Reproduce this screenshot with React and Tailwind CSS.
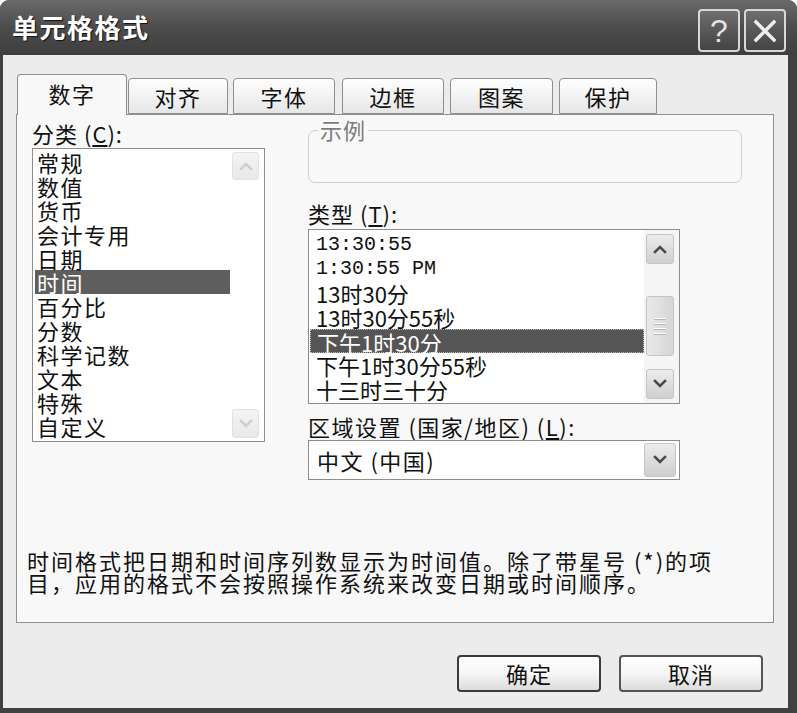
import React from 'react';

const Chevron = ({ up, color }) => (
  <svg width="14" height="10" viewBox="0 0 14 10">
    <path
      d={up ? 'M2 8 L7 3 L12 8' : 'M2 2 L7 7 L12 2'}
      fill="none"
      stroke={color}
      strokeWidth="2.6"
      strokeLinecap="square"
    />
  </svg>
);

const ScrollBtn = ({ up, disabled, className = '' }) => (
  <div
    className={`flex items-center justify-center rounded-[3px] border ${
      disabled
        ? 'border-[#e2e2e2] bg-linear-to-b from-[#f4f4f4] to-[#e8e8e8]'
        : 'border-[#c4c4c4] bg-linear-to-b from-[#ececec] to-[#cfcfcf]'
    } ${className}`}
  >
    <Chevron up={up} color={disabled ? '#cfcfcf' : '#4a4a4a'} />
  </div>
);

const Tab = ({ label, active, className = '' }) => (
  <div
    className={`flex items-center justify-center rounded-t-[4px] border border-[#8f8f8f] text-[22px] tracking-[1.5px] ${
      active
        ? 'relative z-10 -mb-px h-[41px] border-b-0 bg-[#f8f8f8] pb-[3px]'
        : 'h-[36px] bg-linear-to-b from-[#ffffff] to-[#e6e6e6] pt-[1px]'
    } ${className}`}
  >
    {label}
  </div>
);

const categories = ['常规', '数值', '货币', '会计专用', '日期', '时间', '百分比', '分数', '科学记数', '文本', '特殊', '自定义'];

const types = [
  { t: '13:30:55', mono: true },
  { t: '1:30:55 PM', mono: true },
  { t: '13时30分' },
  { t: '13时30分55秒' },
  { t: '下午1时30分', sel: true },
  { t: '下午1时30分55秒' },
  { t: '十三时三十分' },
];

export default function App() {
  return (
    <div className="h-[713px] w-[797px] bg-white font-['Noto_Sans_CJK_SC',sans-serif] text-[#111]">
      <div className="flex h-full flex-col overflow-hidden rounded-t-[9px] bg-[#404040]">
        {/* title bar */}
        <div className="flex h-[55px] shrink-0 items-center justify-between bg-linear-to-b from-[#6a6a6a] via-[#4c4c4c] to-[#3e3e3e] pl-[12px] pr-[11px]">
          <div className="pb-[2px] text-[26px] font-bold tracking-[1.5px] text-white [text-shadow:1px_1px_1px_#111]">
            单元格格式
          </div>
          <div className="flex gap-[4px] pt-[6px]">
            <div className="flex h-[43px] w-[42px] items-center justify-center rounded-[4px] border-2 border-[#d8d8d8] bg-linear-to-b from-[#6e6e6e] to-[#444] font-['Liberation_Sans',sans-serif] text-[32px] leading-none text-[#e4e4e4]">
              ?
            </div>
            <div className="flex h-[43px] w-[42px] items-center justify-center rounded-[4px] border-2 border-[#d8d8d8] bg-linear-to-b from-[#6e6e6e] to-[#444]">
              <svg width="26" height="26" viewBox="0 0 26 26">
                <path d="M4 4 L22 22 M22 4 L4 22" stroke="#eee" strokeWidth="3.4" strokeLinecap="square" />
              </svg>
            </div>
          </div>
        </div>

        {/* body */}
        <div className="mb-[5px] ml-[3px] mr-[9px] flex flex-1 flex-col bg-[#ececec]">
          <div className="flex items-end pl-[14px] pt-[19px]">
            <Tab label="数字" active className="w-[110px]" />
            <Tab label="对齐" className="ml-px w-[100px]" />
            <Tab label="字体" className="ml-[5px] w-[102px]" />
            <Tab label="边框" className="ml-[7px] w-[102px]" />
            <Tab label="图案" className="ml-[6px] w-[103px]" />
            <Tab label="保护" className="ml-[6px] w-[98px]" />
          </div>

          <div className="ml-[13px] flex h-[509px] w-[758px] flex-col border border-[#8f8f8f] bg-[#f8f8f8]">
            <div className="flex items-start">
              {/* left column */}
              <div className="pl-[15px] pt-[6px]">
                <div className="h-[24px] text-[22px] leading-[24px] tracking-[1px]">
                  分类 (<span className="underline">C</span>):
                </div>
                <div className="mt-[3px] flex h-[294px] w-[233px] border border-[#8e8e8e] bg-white">
                  <div className="flex-1 pl-[2px] pt-px">
                    {categories.map((c) => (
                      <div
                        key={c}
                        className={`h-[24px] pl-[2px] text-[22px] leading-[24px] tracking-[1.5px] ${
                          c === '时间' ? 'bg-[#5e5e5e] text-white' : ''
                        }`}
                      >
                        {c}
                      </div>
                    ))}
                  </div>
                  <div className="flex w-[34px] flex-col items-center justify-between py-[3px] pr-[3px]">
                    <ScrollBtn up disabled className="h-[28px] w-[27px]" />
                    <ScrollBtn disabled className="h-[29px] w-[27px]" />
                  </div>
                </div>
              </div>

              {/* right column */}
              <div className="ml-[43px] pt-[15px]">
                <div className="relative h-[53px] w-[434px] rounded-[7px] border border-[#cfcfcf]">
                  <div className="absolute left-[9px] top-[-14px] bg-[#f8f8f8] px-[2px] text-[22px] leading-[24px] tracking-[1px] text-[#7c7c7c]">
                    示例
                  </div>
                </div>
                <div className="mt-[18px] h-[24px] text-[22px] leading-[24px] tracking-[1px]">
                  类型 (<span className="underline">T</span>):
                </div>
                <div className="mt-[4px] flex h-[175px] w-[372px] border border-[#8e8e8e] bg-white">
                  <div className="flex-1 pl-px pt-[3px]">
                    {types.map((r) => (
                      <div
                        key={r.t}
                        className={`h-[24px] whitespace-pre pl-[6px] ${
                          r.mono
                            ? "font-['Liberation_Mono',monospace] text-[20px] leading-[23px]"
                            : 'text-[22px] leading-[24px]'
                        } ${r.sel ? 'border border-dotted border-[#bbb] bg-[#555] pl-[5px] leading-[22px] text-white' : ''}`}
                      >
                        {r.t}
                      </div>
                    ))}
                  </div>
                  <div className="flex w-[35px] flex-col items-center bg-[#f5f5f5] py-[4px] pr-[4px]">
                    <ScrollBtn up className="h-[30px] w-[28px]" />
                    <div className="mt-[32px] flex h-[60px] w-[28px] flex-col items-center justify-center gap-[3px] rounded-[3px] border border-[#c4c4c4] bg-linear-to-r from-[#e9e9e9] to-[#d6d6d6]">
                      <div className="h-[2px] w-[12px] border-t border-b border-t-white border-b-[#b4b4b4]" />
                      <div className="h-[2px] w-[12px] border-t border-b border-t-white border-b-[#b4b4b4]" />
                      <div className="h-[2px] w-[12px] border-t border-b border-t-white border-b-[#b4b4b4]" />
                      <div className="h-[2px] w-[12px] border-t border-b border-t-white border-b-[#b4b4b4]" />
                    </div>
                    <div className="flex-1" />
                    <ScrollBtn className="h-[30px] w-[28px]" />
                  </div>
                </div>
                <div className="mt-[10px] h-[24px] text-[22px] leading-[24px] tracking-[1.5px]">
                  区域设置 (国家/地区) (<span className="underline">L</span>):
                </div>
                <div className="mt-[2px] flex h-[40px] w-[372px] items-center border border-[#8e8e8e] bg-white pr-[3px]">
                  <div className="flex-1 pl-[8px] text-[22px] tracking-[1.5px]">中文 (中国)</div>
                  <ScrollBtn className="h-[34px] w-[32px]" />
                </div>
              </div>
            </div>

            <div className="ml-[10px] mt-[69px] text-[22px] leading-[22px] tracking-[2px]">
              时间格式把日期和时间序列数显示为时间值。除了带星号 (*)的项
              <br />
              目，应用的格式不会按照操作系统来改变日期或时间顺序。
            </div>
          </div>

          <div className="mt-[32px] flex justify-end gap-[18px] pr-[25px]">
            <div className="flex h-[37px] w-[144px] items-center justify-center rounded-[4px] border-2 border-[#3a3a3a] bg-linear-to-b from-white via-[#f6f6f6] to-[#dcdcdc] text-[22px] tracking-[1px]">
              确定
            </div>
            <div className="flex h-[37px] w-[144px] items-center justify-center rounded-[4px] border-2 border-[#555] bg-linear-to-b from-white via-[#f6f6f6] to-[#dcdcdc] text-[22px] tracking-[1px]">
              取消
            </div>
          </div>
        </div>
      </div>
    </div>
  );
}
